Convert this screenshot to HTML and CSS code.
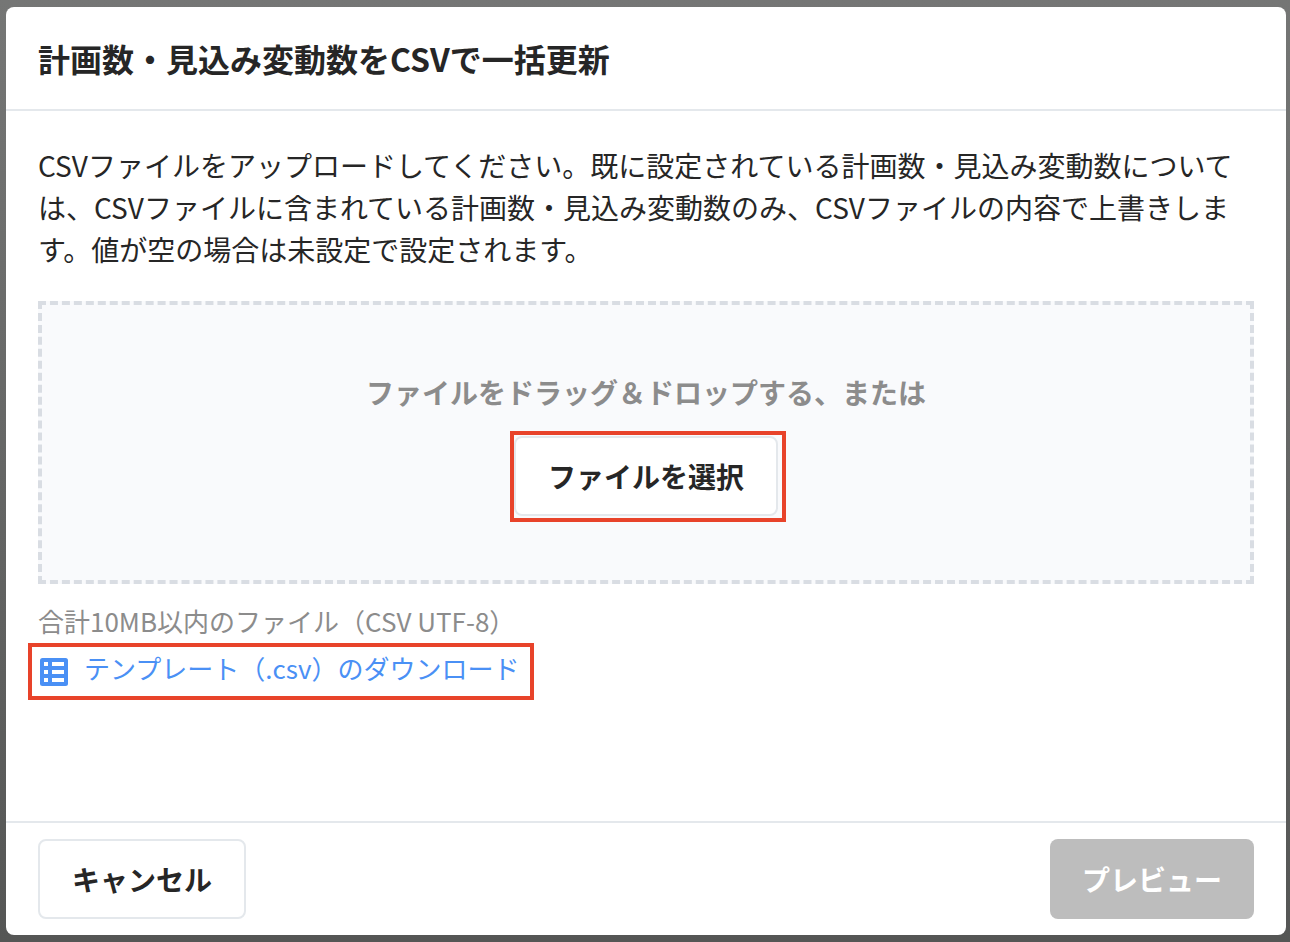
FILE: index.html
```html
<!DOCTYPE html>
<html lang="ja">
<head>
    <meta charset="UTF-8">
    <title>CSV一括更新</title>
    <link rel="stylesheet" href="styles.css">
</head>
<body>
    <div class="modal">
        <div class="modal-header">
            <h2>計画数・見込み変動数をCSVで一括更新</h2>
        </div>
        <div class="modal-body">
            <p class="description">CSVファイルをアップロードしてください。既に設定されている計画数・見込み変動数については、CSVファイルに含まれている計画数・見込み変動数のみ、CSVファイルの内容で上書きします。値が空の場合は未設定で設定されます。</p>
            <div class="dropzone">
                <div class="drop-text">ファイルをドラッグ＆ドロップする、または</div>
                <div class="highlight highlight-select">
                    <button class="select-button">ファイルを選択</button>
                </div>
            </div>
            <div class="file-note">合計10MB以内のファイル（CSV UTF-8）</div>
            <div class="highlight highlight-link">
                <svg class="table-icon" viewBox="0 0 28 28">
                    <rect width="28" height="28" rx="2.5" fill="#4a90f5"/>
                    <g fill="#fff">
                        <rect x="4" y="4" width="4" height="4"/>
                        <rect x="12" y="4" width="12" height="4"/>
                        <rect x="4" y="12" width="4" height="4"/>
                        <rect x="12" y="12" width="12" height="4"/>
                        <rect x="4" y="20" width="4" height="4"/>
                        <rect x="12" y="20" width="12" height="4"/>
                    </g>
                </svg>
                <a class="template-link">テンプレート（.csv）のダウンロード</a>
            </div>
        </div>
        <div class="modal-footer">
            <button class="cancel-button">キャンセル</button>
            <button class="preview-button">プレビュー</button>
        </div>
    </div>
</body>
</html>
```

FILE: styles.css
```css
* {
    box-sizing: border-box;
}

html, body {
    height: 100%;
}

body {
    margin: 0;
    padding: 7px 4px 7px 6px;
    background: linear-gradient(#757675, #555655);
    font-family: "Noto Sans CJK JP", "Noto Sans", sans-serif;
    color: #262626;
    overflow: hidden;
}

.modal {
    height: 928px;
    background-color: white;
    border-radius: 8px;
    display: flex;
    flex-direction: column;
}

.modal-header {
    height: 104px;
    padding: 0 32px;
    display: flex;
    align-items: center;
    border-bottom: 2px solid #e4e8ec;
}

.modal-header h2 {
    margin: 0;
    font-size: 32px;
    font-weight: 700;
}

.modal-body {
    flex: 1;
    padding: 33px 32px 0;
}

.description {
    margin: 0;
    font-size: 28px;
    line-height: 42px;
}

.dropzone {
    margin-top: 31px;
    height: 283px;
    background-color: #f9fafc;
    border: 4px dashed #d9dde3;
    display: flex;
    flex-direction: column;
    align-items: center;
    padding-top: 67px;
}

.drop-text {
    font-size: 28px;
    font-weight: 700;
    line-height: 40px;
    color: #8c8c8c;
}

.highlight {
    border: 4px solid #e8432a;
}

.highlight-select {
    margin: 19px 0 0 4px;
    width: 276px;
    height: 91px;
    padding: 1px 4px 2px 0;
}

.select-button {
    width: 100%;
    height: 100%;
    background-color: white;
    border: 2px solid #e4e8ec;
    border-radius: 8px;
    font-family: inherit;
    font-size: 28px;
    font-weight: 700;
    color: #262626;
}

.file-note {
    margin-top: 17px;
    font-size: 26px;
    line-height: 40px;
    color: #8c8c8c;
}

.highlight-link {
    margin: 2px 0 0 -10px;
    width: 506px;
    height: 57px;
    padding-left: 8px;
    display: flex;
    align-items: center;
    gap: 16px;
}

.table-icon {
    width: 28px;
    height: 28px;
}

.template-link {
    margin-bottom: 8px;
    font-size: 26px;
    color: #4a90f5;
}

.modal-footer {
    height: 114px;
    padding: 16px 32px;
    border-top: 2px solid #e4e8ec;
    display: flex;
    justify-content: space-between;
    align-items: flex-start;
}

.cancel-button {
    width: 208px;
    height: 80px;
    background-color: white;
    border: 2px solid #e4e8ec;
    border-radius: 8px;
    font-family: inherit;
    font-size: 28px;
    font-weight: 700;
    color: #262626;
}

.preview-button {
    width: 204px;
    height: 80px;
    background-color: #bdbdbd;
    border: none;
    border-radius: 8px;
    font-family: inherit;
    font-size: 28px;
    font-weight: 700;
    color: white;
}
```
